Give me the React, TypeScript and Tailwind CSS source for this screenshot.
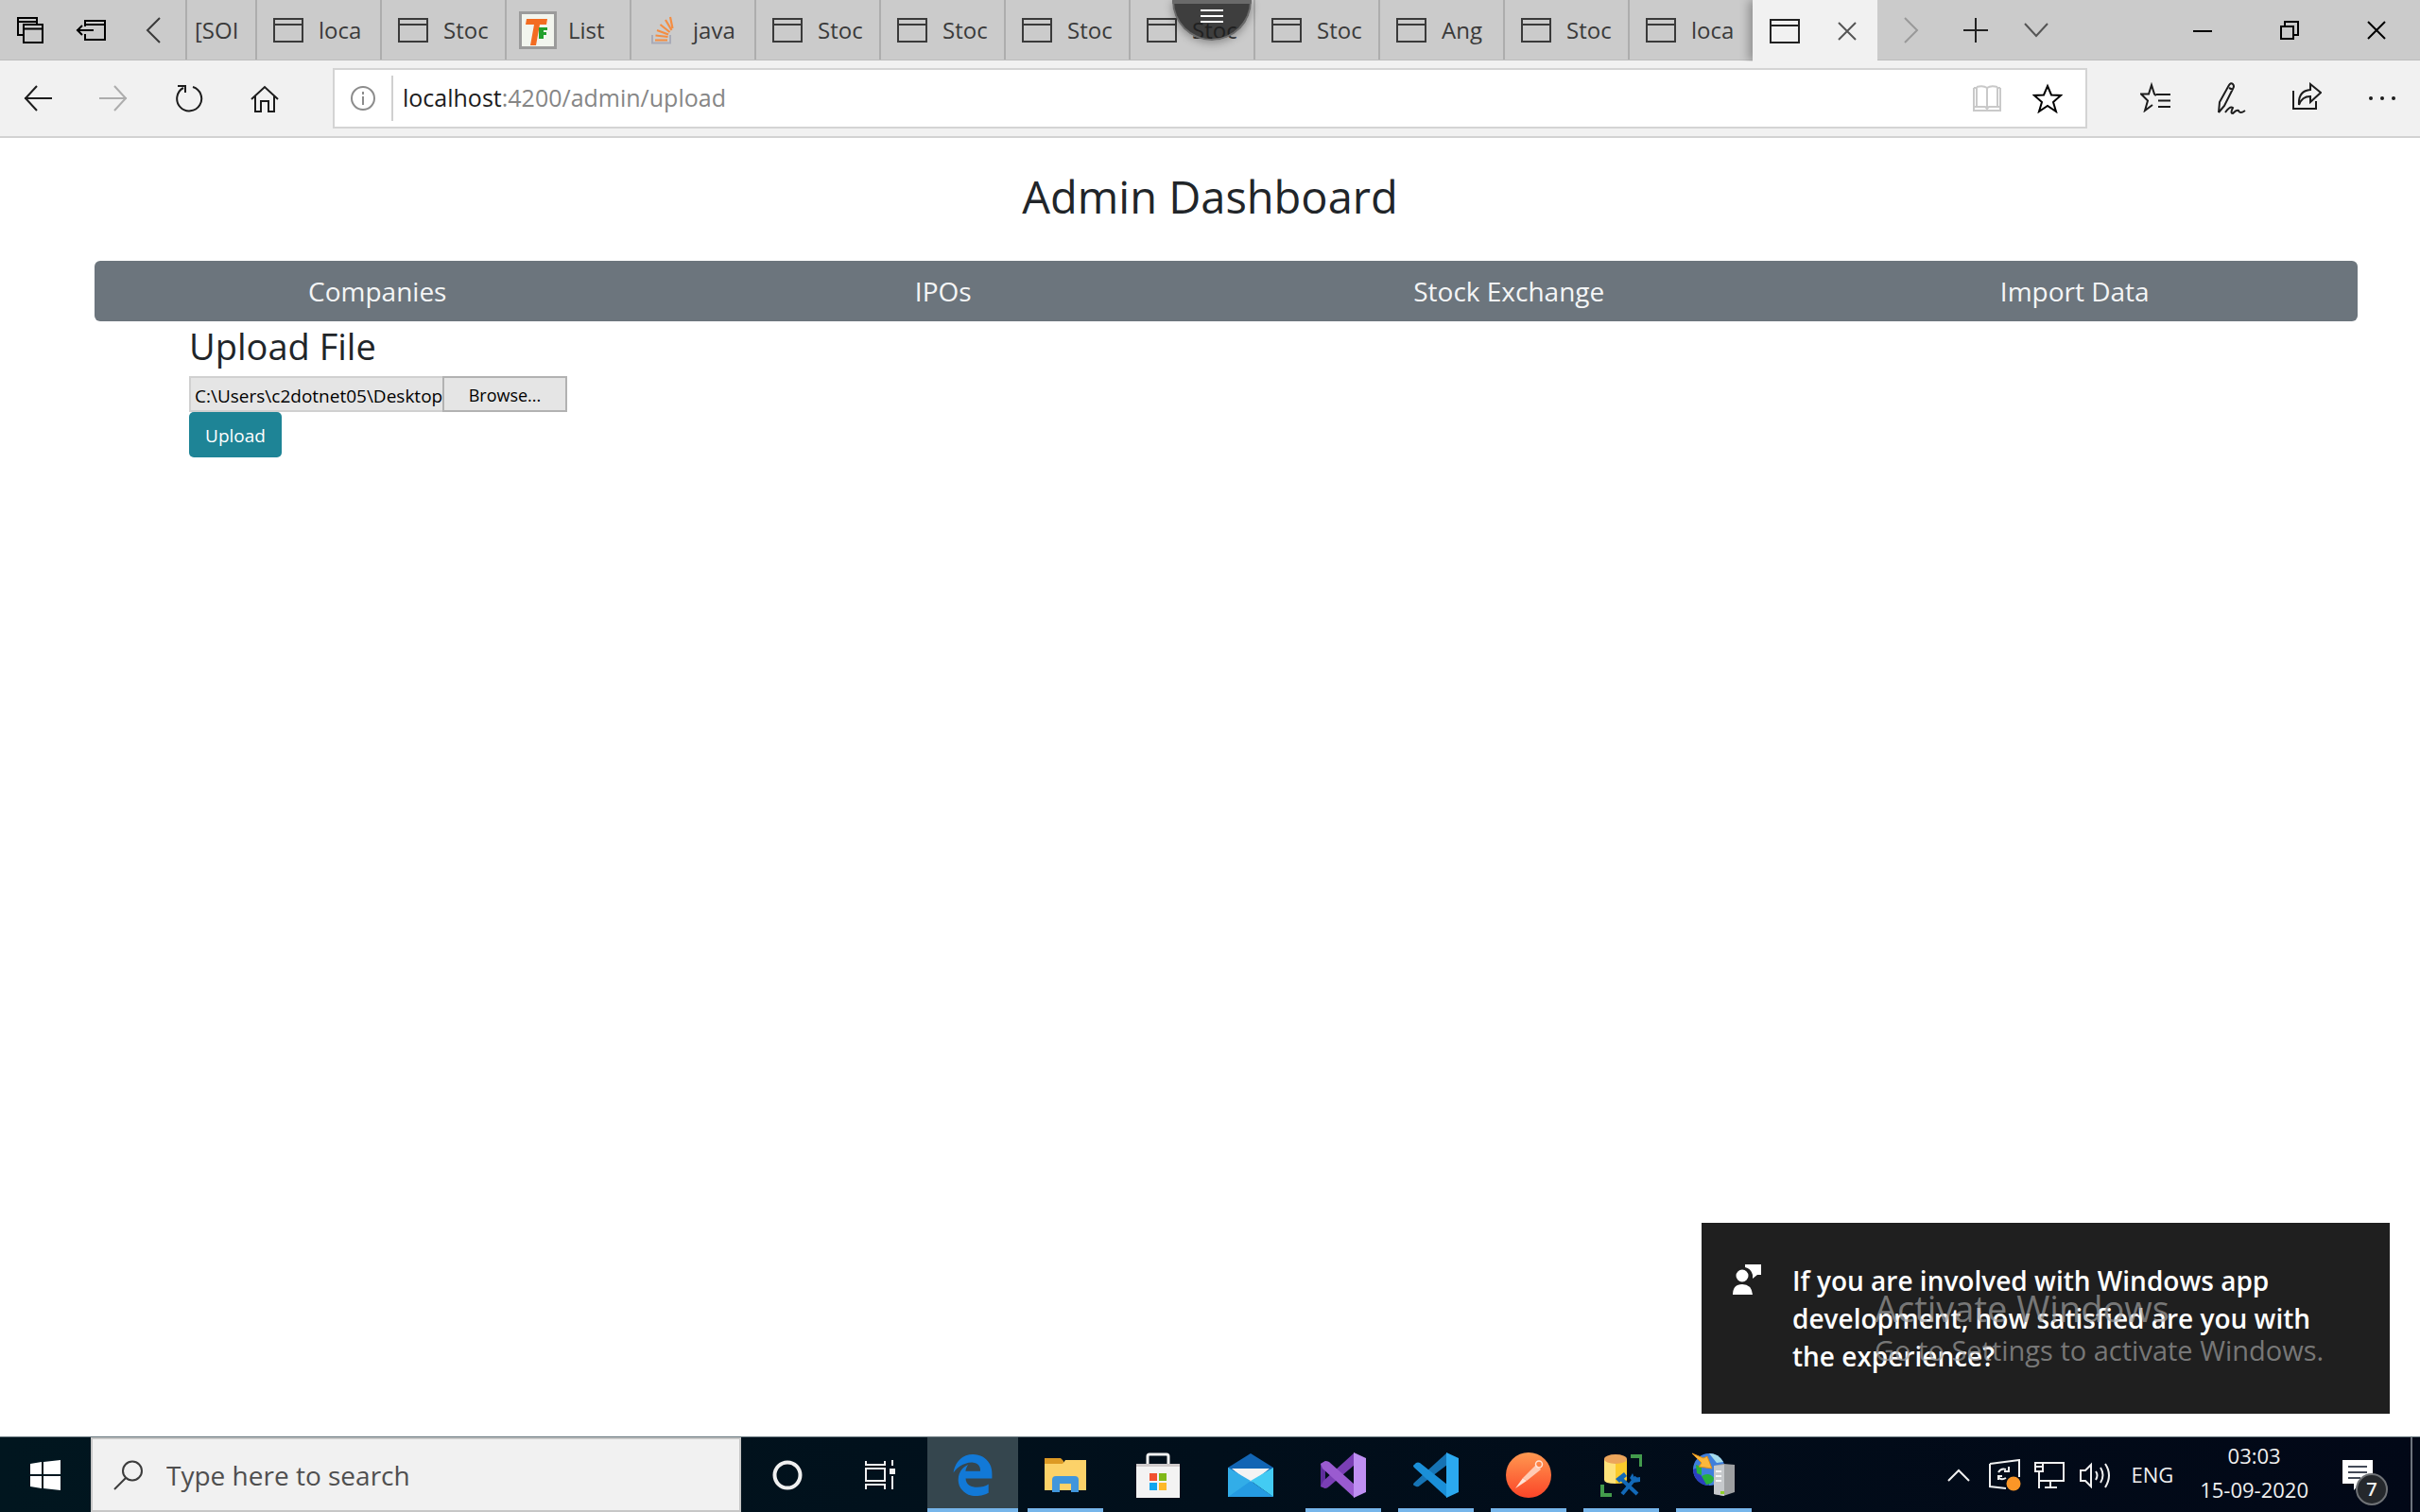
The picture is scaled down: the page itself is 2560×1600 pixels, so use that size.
import type { ReactNode } from "react";

type IconProps = { className?: string; children?: ReactNode; box: string; width?: number };

function Line({ className = "", children, box, width = 2 }: IconProps) {
  return (
    <svg viewBox={box} className={`block shrink-0 ${className}`} fill="none" stroke="currentColor" strokeWidth={width} aria-hidden="true">
      {children}
    </svg>
  );
}

function PageIcon() {
  return (
    <Line box="0 0 32 26" className="h-[26px] w-8">
      <path d="M1 1h30v24H1zM1 7h30" />
    </Line>
  );
}

function ForumIcon() {
  return (
    <svg viewBox="0 0 40 40" className="block size-10 shrink-0" aria-hidden="true">
      <rect x="1.5" y="1.5" width="37" height="37" fill="#f2f5ee" stroke="#9b9b9b" strokeWidth="3" />
      <path d="M8 8h22l-1 6h-7l-4 22h-6l4-22H7z" fill="#f36c21" />
      <path d="M21 17h9v3h-4v2h3v3h-3v4h-5z" fill="#22a02c" />
    </svg>
  );
}

function StackIcon() {
  return (
    <svg viewBox="0 0 26 30" className="block h-[30px] w-[26px] shrink-0" fill="none" aria-hidden="true">
      <path d="M2 20v8.500h19V20" stroke="#a9abb8" strokeWidth="2" />
      <path d="M5 25.500h13M5.500 20.500l13 1.500M7 15l12 4.500M10.500 9l10 8M16 4l6.500 11M21 1l2.500 12" stroke="#f48d42" strokeWidth="2.200" />
    </svg>
  );
}

type Tab = { title: string; kind: "page" | "forum" | "stack" };

const tabs: Tab[] = [
  { title: "loca", kind: "page" },
  { title: "Stoc", kind: "page" },
  { title: "List", kind: "forum" },
  { title: "java", kind: "stack" },
  { title: "Stoc", kind: "page" },
  { title: "Stoc", kind: "page" },
  { title: "Stoc", kind: "page" },
  { title: "Stoc", kind: "page" },
  { title: "Stoc", kind: "page" },
  { title: "Ang", kind: "page" },
  { title: "Stoc", kind: "page" },
  { title: "loca", kind: "page" },
];

function TabButton({ tab }: { tab: Tab }) {
  return (
    <button className="flex h-full w-[132px] items-center border-l-2 border-[#adadad] text-left">
      <span className="flex w-[65px] shrink-0 justify-center">
        {tab.kind === "page" && <PageIcon />}
        {tab.kind === "forum" && <ForumIcon />}
        {tab.kind === "stack" && <StackIcon />}
      </span>
      <span className="whitespace-nowrap">{tab.title}</span>
    </button>
  );
}

function TabStrip() {
  return (
    <div className="relative flex h-16 items-center border-b border-[#bdbdbd] bg-[#cbcbcb] text-2xl text-[#3a3a3a]">
      <button aria-label="Tabs you've set aside" className="flex w-16 shrink-0 justify-center text-black">
        <Line box="0 0 28 28" className="size-7">
          <path d="M7 19H1V1h20v6M1 5h20M7 8h20v19H7zM7 12.500h20" />
        </Line>
      </button>
      <button aria-label="Set these tabs aside" className="flex w-16 shrink-0 justify-center text-black">
        <Line box="0 0 32 22" className="h-[22px] w-8">
          <path d="M10 7V1h21v20H10v-6M10 5h21M1 11h18M7 6l-5 5 5 5" />
        </Line>
      </button>
      <button aria-label="Scroll tabs left" className="flex w-17 shrink-0 justify-center">
        <Line box="0 0 16 28" className="h-7 w-4">
          <path d="M15 1L2 14l13 13" />
        </Line>
      </button>
      <button className="flex h-full w-[74px] shrink-0 items-center border-l-2 border-[#adadad] pl-2 text-left">
        <span className="whitespace-nowrap">[SOI</span>
      </button>
      {tabs.map((tab, i) => (
        <TabButton key={i} tab={tab} />
      ))}
      <div className="z-10 flex h-[65px] w-[132px] shrink-0 items-center self-start bg-[#f1f1f1] pl-[18px] text-[#222] shadow-[-4px_0_10px_rgba(0,0,0,0.3)] [clip-path:inset(0_0_0_-14px)]">
        <PageIcon />
        <button aria-label="Close tab" className="ml-10 text-[#555]">
          <Line box="0 0 20 20" className="size-5">
            <path d="M1 1l18 18M19 1L1 19" />
          </Line>
        </button>
      </div>
      <div className="flex items-center">
        <button aria-label="Scroll tabs right" className="flex w-[72px] justify-center text-[#999]">
          <Line box="0 0 16 28" className="h-7 w-4">
            <path d="M1 1l13 13L1 27" />
          </Line>
        </button>
        <button aria-label="New tab" className="flex w-16 justify-center text-[#222]">
          <Line box="0 0 26 26" className="size-[26px]">
            <path d="M13 0v26M0 13h26" />
          </Line>
        </button>
        <button aria-label="Show tab previews" className="flex w-16 justify-center text-[#555]">
          <Line box="0 0 26 16" className="h-4 w-[26px]">
            <path d="M1 1l12 13L25 1" />
          </Line>
        </button>
      </div>
      <div className="ml-auto flex items-center text-black">
        <button aria-label="Minimize" className="flex w-[92px] justify-center">
          <Line box="0 0 20 20" className="size-5">
            <path d="M0 11h20" />
          </Line>
        </button>
        <button aria-label="Restore" className="flex w-[92px] justify-center">
          <Line box="0 0 20 20" className="size-5">
            <path d="M1 6h13v13H1zM5 6V1h14v14h-5" />
          </Line>
        </button>
        <button aria-label="Close" className="flex w-[92px] justify-center">
          <Line box="0 0 20 20" className="size-5">
            <path d="M1 1l18 18M19 1L1 19" />
          </Line>
        </button>
      </div>
      <button
        aria-label="Session menu"
        className="absolute top-0 left-1/2 z-20 flex h-[43px] w-[84px] -translate-x-[40px] justify-center rounded-b-full border-2 border-t-4 border-[#6a6a6a] bg-[#1a1a1a]/80 pt-1.5 text-white shadow-[0_2px_10px_rgba(0,0,0,0.35)]"
      >
        <Line box="0 0 24 14" className="h-3.5 w-6">
          <path d="M0 1h24M0 7h24M0 13h24" />
        </Line>
      </button>
    </div>
  );
}

function Toolbar() {
  return (
    <div className="flex h-[82px] items-center border-b-2 border-[#d2d2d2] bg-[#f1f1f1] text-[#1c1c1c]">
      <button aria-label="Back" className="flex w-20 shrink-0 justify-center">
        <Line box="0 0 30 28" className="h-7 w-[30px]">
          <path d="M14 1L2 14l12 13M1 14h29" />
        </Line>
      </button>
      <button aria-label="Forward" className="flex w-20 shrink-0 justify-center text-[#adadad]">
        <Line box="0 0 30 28" className="h-7 w-[30px]">
          <path d="M16 1l12 13-12 13M0 14h29" />
        </Line>
      </button>
      <button aria-label="Refresh" className="flex w-20 shrink-0 justify-center">
        <Line box="0 0 30 30" className="size-[30px]">
          <path d="M19 3a13 13 0 1 1-10 1M3 2h8v7" />
        </Line>
      </button>
      <button aria-label="Home" className="flex w-20 shrink-0 justify-center">
        <Line box="0 0 30 29" className="h-[29px] w-[30px]">
          <path d="M1 15L15 2l14 13M5 12v16h6V17h8v11h6V12" />
        </Line>
      </button>
      <div className="ml-8 flex h-16 flex-1 items-center border-2 border-[#d4d4d4] bg-white">
        <button aria-label="Site information" className="flex w-[62px] shrink-0 justify-center border-r-2 border-[#d0d0d0] py-[11px] text-[#8c8c8c]">
          <Line box="0 0 26 26" className="size-[26px]">
            <circle cx="13" cy="13" r="12" />
            <path d="M13 11v9M13 6v3" />
          </Line>
        </button>
        <a href="#url" className="flex-1 pl-2.5 text-[25px] whitespace-nowrap text-[#868686]">
          <span className="text-[#1c1c1c]">localhost</span>:4200/admin/upload
        </a>
        <button aria-label="Reading view" className="flex w-16 justify-center text-[#c9c9c9]">
          <Line box="0 0 30 28" className="h-7 w-[30px]">
            <path d="M1 3h3v20H1M29 3h-3v20h3M1 3v24h28V3M4 2q7-2 11 1 4-3 11-1M15 3v24M4 23h9l2 2 2-2h9" />
          </Line>
        </button>
        <button aria-label="Add to favorites" className="mr-2 flex w-16 justify-center text-black">
          <Line box="0 0 32 32" className="size-8">
            <path d="M16 3l4 9.500 10 .5-8 7 3 10-9-6-9 6 3-10-8-7 10-.5z" />
          </Line>
        </button>
      </div>
      <div className="ml-8 flex shrink-0">
        <button aria-label="Favorites" className="flex w-20 justify-center">
          <Line box="0 0 32 32" className="size-8">
            <path d="M17 13.500h-1l-1-1L12 3 9 12.500H1l7 7L5 30l8-6M17 13h15M19 19.500h13M19 26h13" />
          </Line>
        </button>
        <button aria-label="Add notes" className="flex w-20 justify-center">
          <Line box="0 0 32 34" className="h-[34px] w-8">
            <path d="M3 32l1-11L14 3q2-3 4-1t0 5L9 25l-6 7M14 6l4 2M10 32q5-7 8-5-3 6 0 6 4-4 6-3 1 4 7 0" />
          </Line>
        </button>
        <button aria-label="Share" className="flex w-20 justify-center">
          <Line box="0 0 32 30" className="h-[30px] w-8">
            <path d="M2 9v19h24v-8M20 2l11 9-11 10v-6q-9 0-12 9Q7 9 20 8z" />
          </Line>
        </button>
        <button aria-label="Settings and more" className="flex w-20 items-center justify-center">
          <svg viewBox="0 0 30 6" className="block h-1.5 w-[30px]" fill="currentColor" aria-hidden="true">
            <circle cx="3" cy="3" r="2" />
            <circle cx="15" cy="3" r="2" />
            <circle cx="27" cy="3" r="2" />
          </svg>
        </button>
      </div>
    </div>
  );
}

function Dashboard() {
  return (
    <main className="flex-1 bg-white pt-8 text-[#212529]">
      <h1 className="text-center text-[47px] leading-[60px]">Admin Dashboard</h1>
      <nav className="mt-[38px] mr-[66px] ml-[100px] grid h-16 grid-cols-4 items-center rounded-md bg-[#6c757d] text-center text-[28px] text-[#f4f5f6]">
        <a href="#companies">Companies</a>
        <a href="#ipos">IPOs</a>
        <a href="#exchange">Stock Exchange</a>
        <a href="#import">Import Data</a>
      </nav>
      <section className="ml-[200px]">
        <h2 className="h-[58px] text-[38px] leading-[52px]">Upload File</h2>
        <div className="flex h-[38px] w-[400px] text-black">
          <input
            aria-label="File path"
            readOnly
            value="C:\Users\c2dotnet05\Desktop"
            className="w-[268px] border-2 border-r-0 border-[#d0d0d0] bg-[#e5e5e5] pt-1 pl-1 text-[19px] outline-none"
          />
          <button className="flex-1 border-2 border-[#b2b2b2] bg-[#e5e5e5] pt-0.5 text-[18px]">Browse...</button>
        </div>
        <button className="h-12 w-[98px] rounded-[5px] bg-[#1e8496] pt-0.5 text-[19px] text-white">Upload</button>
      </section>
    </main>
  );
}

function Toast() {
  return (
    <aside className="absolute right-8 bottom-[104px] flex h-[202px] w-[728px] bg-[#1f1f1f] pt-[41px] pl-[33px] text-white">
      <svg viewBox="0 0 30 34" className="mt-0.5 block h-[34px] w-[30px] shrink-0" aria-hidden="true">
        <path d="M13 1h17v11h-4l-5 4v-4q-2-7-8-8z" fill="currentColor" />
        <circle cx="10" cy="13" r="7.500" fill="currentColor" stroke="#1f1f1f" strokeWidth="2" />
        <path d="M0 33q0-11 10-11t11 11z" fill="currentColor" />
      </svg>
      <p className="ml-[33px] text-[28px] leading-10 font-semibold whitespace-nowrap">
        If you are involved with Windows app
        <br />
        development, how satisfied are you with
        <br />
        the experience?
      </p>
      <div className="absolute top-[65px] left-[183px] whitespace-nowrap text-[#a0a0a0]/70">
        <p className="text-[38px] leading-[50px]">Activate Windows</p>
        <p className="text-[29px] leading-10">Go to Settings to activate Windows.</p>
      </div>
    </aside>
  );
}

function Edge() {
  return (
    <svg viewBox="26 8 460 496" className="block h-11 w-[42px]" fill="#1279d7">
      <path d="M486.286 243.671c0-44.032-7.754-84.465-28.801-122.405C416.498 47.879 343.912 8.001 258.893 8.001 118.962 7.724 40.617 113.214 26.056 227.679c42.429-61.312 117.073-121.376 220.375-124.966 0 0 109.666 0 99.419 104.957H169.997c6.369-37.386 18.554-58.986 34.339-78.926-75.048 34.893-121.85 96.096-120.742 188.315.83 71.448 50.124 144.836 120.743 171.976 83.357 31.847 192.776 7.2 240.132-21.324V363.307c-80.864 56.494-270.871 60.925-272.255-67.572h314.073v-52.064z" />
    </svg>
  );
}

function Folder() {
  return (
    <svg viewBox="0 0 44 38" className="block h-[38px] w-11">
      <path d="M0 1h17l3 3v4H0z" fill="#dd9a24" />
      <path d="M0 7h19l3-4h22v32H0z" fill="#fcd269" />
      <path d="M8 37V24q0-4 4-4h20q4 0 4 4v13h-8v-9H16v9z" fill="#4096dc" />
    </svg>
  );
}

function Store() {
  return (
    <svg viewBox="0 0 46 48" className="block h-12 w-[46px]">
      <path d="M12 16V4q0-2 2-2h18q2 0 2 2v12" fill="none" stroke="#f1f1f1" strokeWidth="3" />
      <path d="M0 12h46v36H0z" fill="#f3f3f3" />
      <path d="M0 12h46v3H0z" fill="#cfcaca" />
      <path d="M14 22h8v8h-8z" fill="#f1502f" />
      <path d="M24 22h8v8h-8z" fill="#80b918" />
      <path d="M14 32h8v8h-8z" fill="#10a5ee" />
      <path d="M24 32h8v8h-8z" fill="#fdb92a" />
    </svg>
  );
}

function Mail() {
  return (
    <svg viewBox="0 0 48 46" className="block h-[46px] w-12">
      <path d="M0 15L24 0l24 15v10H0z" fill="#1265b4" />
      <path d="M4 16h40L24 32z" fill="#f3f3f3" />
      <path d="M0 15l48 31H0z" fill="#32ade8" />
      <path d="M48 15v31L24 29z" fill="#43cbf3" />
      <path d="M24 29l24 17H0z" fill="#259be2" />
      <path d="M0 15l24 14L0 46z" fill="#32ade8" />
    </svg>
  );
}

function VisualStudio() {
  return (
    <svg viewBox="0 0 48 48" className="block size-12">
      <path d="M0 12l5-3v29l-5-2z" fill="#5e2d9b" />
      <path d="M0 36l5 2q2 0 4-2l27-23V0L3 30z" fill="#7a3fb5" />
      <path d="M0 12l5-3q2 0 4 1l27 24v14L2 17z" fill="#9a5bd0" />
      <path d="M35 0l13 6v36l-13 6z" fill="#bf8ff2" />
    </svg>
  );
}

function VsCode() {
  return (
    <svg viewBox="0 0 48 48" className="block size-12">
      <path d="M1 32q-2 2 0 3l2 1q2 1 4-1l29-22V0z" fill="#1673b4" />
      <path d="M1 16q-2-2 0-3l2-2q2-1 4 0l29 23v14z" fill="#1a8fd8" />
      <path d="M35 0l13 6v36l-13 6z" fill="#2ba9f0" />
    </svg>
  );
}

function Postman() {
  return (
    <svg viewBox="0 0 48 48" className="block size-12">
      <defs>
        <linearGradient id="postman" x1="0" y1="0" x2="0" y2="1">
          <stop offset="0" stopColor="#ff9850" />
          <stop offset="1" stopColor="#fb4528" />
        </linearGradient>
      </defs>
      <circle cx="24" cy="24" r="24" fill="url(#postman)" />
      <path d="M10 38l8-11 4 3z" fill="#ffe3d6" />
      <path d="M18 27L32 13l5 5-15 12z" fill="#ffcbb4" />
      <circle cx="35" cy="12.500" r="3.500" fill="none" stroke="#ffe3d6" strokeWidth="1.500" />
    </svg>
  );
}

function SqlStudio() {
  return (
    <svg viewBox="0 0 44 46" className="block h-[46px] w-11">
      <path d="M4 6h12v26Q4 32 4 28z" fill="#fee27a" />
      <path d="M16 6h12v22q0 4-12 4z" fill="#fccb2b" />
      <ellipse cx="16" cy="6" rx="12" ry="5" fill="#eca55b" />
      <path d="M32 3h11v11M2 33v11h10" fill="none" stroke="#439b4c" strokeWidth="4" />
      <path d="M23 43l15-18M39 43L21 26" stroke="#1269b8" strokeWidth="4" />
      <path d="M16 27l9-7 3 4-8 7zM34 21l2 5 6-1v5l-7 1-4-5z" fill="#1269b8" />
    </svg>
  );
}

function ServerManager() {
  return (
    <svg viewBox="0 0 46 48" className="block h-12 w-[46px]">
      <circle cx="18" cy="18" r="17" fill="#3f7fdc" />
      <path d="M1 18a17 17 0 0 0 17 17v-5q-10-3-12-14z" fill="#2b3fc0" />
      <path d="M4 13l6 2v9l-5-2zM10 25q8-5 13 2 0 6-8 7z" fill="#27b13c" />
      <path d="M18 1q10 0 15 9l-7 1z" fill="#a6dceb" />
      <path d="M0 1l12 5 4-2 5 13-14-2 3-4z" fill="#fbb83c" stroke="#d98d1c" />
      <path d="M23 14l10-2 12 1v29l-12 4-10-2z" fill="#9ea0a2" />
      <path d="M23 14l11-1v33l-11-2z" fill="#c6c9cc" />
      <path d="M25 20h6M25 25h6M25 30h6" stroke="#f5f6f7" strokeWidth="2" />
      <path d="M30 41h4v3h-4z" fill="#8fd02c" />
    </svg>
  );
}

type TaskbarApp = { name: string; icon: ReactNode; state: "idle" | "open" | "active" };

const apps: TaskbarApp[] = [
  {
    name: "Cortana",
    state: "idle",
    icon: (
      <Line box="0 0 32 32" width={4} className="size-8">
        <circle cx="16" cy="16" r="13.500" />
      </Line>
    ),
  },
  {
    name: "Task View",
    state: "idle",
    icon: (
      <Line box="0 0 34 32" className="h-8 w-[34px]">
        <path d="M2 1v4h20V1M2 31v-5h20v5M2 9h20v13H2zM30 0v6M30 17v14" />
        <path d="M27 9h6v6h-6z" fill="currentColor" stroke="none" />
      </Line>
    ),
  },
  { name: "Microsoft Edge", state: "active", icon: <Edge /> },
  { name: "File Explorer", state: "open", icon: <Folder /> },
  { name: "Microsoft Store", state: "idle", icon: <Store /> },
  { name: "Mail", state: "idle", icon: <Mail /> },
  { name: "Visual Studio", state: "open", icon: <VisualStudio /> },
  { name: "Visual Studio Code", state: "open", icon: <VsCode /> },
  { name: "Postman", state: "open", icon: <Postman /> },
  { name: "SQL Server Management Studio", state: "open", icon: <SqlStudio /> },
  { name: "IIS Manager", state: "open", icon: <ServerManager /> },
];

function AppButton({ app }: { app: TaskbarApp }) {
  return (
    <button aria-label={app.name} className="relative flex h-full w-[98px] items-center justify-center px-px">
      <span className={`flex h-full w-full items-center justify-center ${app.state === "active" ? "bg-[#35464e]" : ""}`}>{app.icon}</span>
      {app.state !== "idle" && (
        <span className={`absolute bottom-0 h-1 bg-[#76b5ea] ${app.state === "active" ? "w-24" : "w-20"}`} />
      )}
    </button>
  );
}

function Taskbar() {
  return (
    <footer className="flex h-20 shrink-0 items-center border-t border-[#66757c] bg-linear-to-r from-[#01161f] via-[#010f1b] to-[#020817] text-[#f0f0f0]">
      <button aria-label="Start" className="flex w-24 shrink-0 justify-center">
        <svg viewBox="0 0 32 32" className="block size-8" fill="#fff" aria-hidden="true">
          <path d="M0 4l12-2v13H0zM14 2l18-2v15H14zM0 17h12v13L0 28zM14 17h18v15l-18-2z" />
        </svg>
      </button>
      <label className="flex h-full w-[688px] shrink-0 items-center border-2 border-[#c6c6c6] bg-[#f1f1f1] pl-[22px] text-[#3c3c3c]">
        <Line box="0 0 32 32" className="size-8">
          <circle cx="20" cy="11.500" r="10" />
          <path d="M13 19L1 31" />
        </Line>
        <input
          type="search"
          aria-label="Search"
          placeholder="Type here to search"
          className="ml-6 flex-1 bg-transparent text-[28px] outline-none placeholder:text-[#4f4f4f]"
        />
      </label>
      <div className="flex h-full">
        {apps.map((app) => (
          <AppButton key={app.name} app={app} />
        ))}
      </div>
      <div className="ml-auto flex h-full items-center text-[22px]">
        <button aria-label="Show hidden icons" className="mr-5">
          <Line box="0 0 24 14" className="h-3.5 w-6">
            <path d="M1 13L12 2l11 11" />
          </Line>
        </button>
        <button aria-label="Windows Update" className="mr-3.5">
          <Line box="0 0 34 34" className="size-[34px]">
            <path d="M1 5l31-4v18M1 5v24l17 2M10 14q3-5 8-3M21 8v5h-5M10 22v-4h4M10 19q3 4 8 1" />
            <circle cx="26" cy="26" r="7.500" fill="#fb9627" stroke="none" />
          </Line>
        </button>
        <button aria-label="Network" className="mr-4">
          <Line box="0 0 32 28" className="h-7 w-8">
            <path d="M9 1h22v19H6M1 1h8v9H1zM1 5h8M5 10v18M17 20v6M11 27h13" />
          </Line>
        </button>
        <button aria-label="Volume" className="mr-5">
          <Line box="0 0 34 28" className="h-7 w-[34px]">
            <path d="M1 9h5l6-6v23l-6-6H1zM17 10q3 4 0 9M22 6q5 8 0 16M27 2q8 12 0 25" />
          </Line>
        </button>
        <button className="mr-7">ENG</button>
        <button className="mr-9 pb-1.5 leading-9">
          03:03
          <br />
          15-09-2020
        </button>
        <button aria-label="Notifications" className="relative mr-6 h-full w-12">
          <svg viewBox="0 0 34 34" className="absolute top-6 left-0 block size-[34px]" aria-hidden="true">
            <path d="M0 0h32v25H18l-6 7v-7H0z" fill="#fff" />
            <path d="M6 7h20M6 13h20M6 19h13" stroke="#434a57" strokeWidth="2" />
          </svg>
          <span className="absolute top-[38px] left-3.5 flex size-[34px] items-center justify-center rounded-full border-2 border-[#6f7276] bg-[#25282c] text-[20px] font-semibold">
            7
          </span>
        </button>
        <button aria-label="Show desktop" className="h-full w-2.5 border-l-2 border-[#6e747d]" />
      </div>
    </footer>
  );
}

export default function App() {
  return (
    <div className="relative flex min-h-screen flex-col overflow-hidden bg-white font-['Open_Sans','Noto_Sans',sans-serif]">
      <header>
        <TabStrip />
        <Toolbar />
      </header>
      <Dashboard />
      <Toast />
      <Taskbar />
    </div>
  );
}
